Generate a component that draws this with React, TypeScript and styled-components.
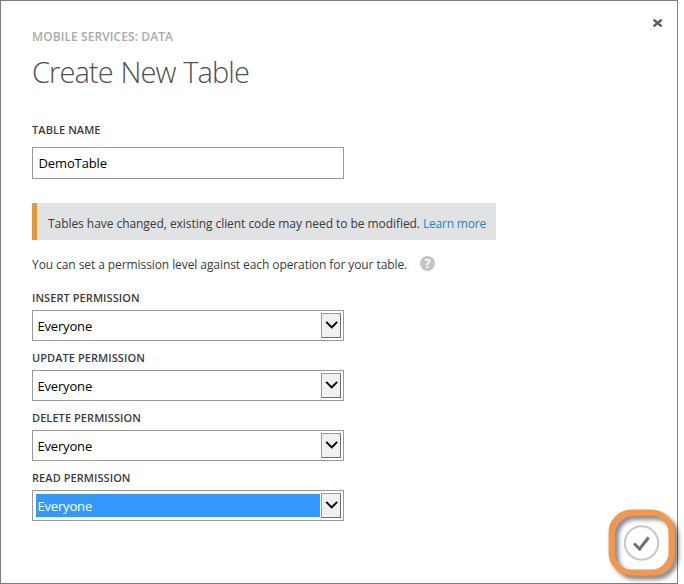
import React from 'react';
import styled, { createGlobalStyle } from 'styled-components';

const GlobalStyle = createGlobalStyle`
  * { box-sizing: border-box; }
  body { margin: 0; background: #fff; overflow: hidden; }
  #root { font-family: "Open Sans", "Noto Sans", sans-serif; }
`;

const Dialog = styled.main`
  position: relative;
  width: 678px;
  height: 584px;
  padding: 27px 0 0 31px;
  border: 1px solid #7f7f7f;
  background: #fff;
  white-space: nowrap;
`;

const CloseButton = styled.button`
  position: absolute;
  top: 16px;
  right: 13.5px;
  width: 12px;
  height: 12px;
  padding: 0;
  border: 0;
  background: none;
  svg { display: block; }
`;

const Breadcrumb = styled.div`
  height: 18px;
  font-size: 12px;
  line-height: 18px;
  font-weight: 600;
  letter-spacing: 0.09px;
  color: #aaa;
`;

const Title = styled.h1`
  margin: 5px 0 0;
  height: 40px;
  font-size: 29px;
  line-height: 41px;
  font-weight: 300;
  letter-spacing: -0.9px;
  word-spacing: 1px;
  color: #505050;
`;

const Label = styled.label`
  display: block;
  height: 16px;
  font-size: 11px;
  line-height: 16px;
  font-weight: 600;
  letter-spacing: 0.07px;
  color: #3c3c3c;
`;

const NameField = styled.section`
  margin-top: 31px;
`;

const TextInput = styled.input`
  display: block;
  width: 312px;
  height: 32px;
  margin-top: 9px;
  padding: 0 5.5px 1px;
  border: 1px solid #999;
  outline: 0;
  font: 13px "Open Sans", sans-serif;
  letter-spacing: -0.12px;
  color: #000;
`;

const Notice = styled.p`
  display: flex;
  align-items: center;
  width: 464px;
  height: 37px;
  margin: 24px 0 0;
  padding: 3px 0 0 11px;
  border-left: 5px solid #e59a36;
  background: #e1e2e4;
  font-size: 12px;
  letter-spacing: -0.055px;
  color: #3a3a3a;
`;

const Link = styled.a`
  margin-left: 3px;
  letter-spacing: -0.2px;
  color: #1c86c5;
`;

const Hint = styled.p`
  display: flex;
  align-items: flex-start;
  height: 18px;
  margin: 15px 0 0;
  font-size: 12px;
  line-height: 20px;
  letter-spacing: -0.082px;
  color: #3a3a3a;
`;

const HelpBadge = styled.span`
  display: grid;
  place-items: center;
  width: 15px;
  height: 15px;
  margin: 1px 0 0 13px;
  border-radius: 50%;
  background: #c4c4c4;
  color: #fff;
  font-size: 12px;
  line-height: 15px;
  font-weight: 700;
  letter-spacing: 0;
`;

const Permissions = styled.section`
  display: grid;
  gap: 9px;
  margin-top: 17px;
`;

const SelectBox = styled.div`
  display: flex;
  width: 312px;
  height: 31px;
  margin-top: 4px;
  padding: 2px;
  border: 1px solid #999;
`;

const SelectValue = styled.span<{ $active: boolean }>`
  width: 284px;
  height: 23px;
  margin: 1px 1px 0;
  padding-left: 1.5px;
  font-size: 13px;
  line-height: 24px;
  letter-spacing: -0.18px;
  color: ${({ $active }) => ($active ? '#fff' : '#000')};
  background: ${({ $active }) => ($active ? '#3399ff' : '#fff')};
`;

const SelectArrow = styled.span`
  width: 20px;
  height: 25px;
  border: 1px solid #999;
  border-right-color: #6e6e6e;
  border-bottom-color: #6e6e6e;
  background: #f0f0f0;
  svg { display: block; }
`;

const ConfirmButton = styled.button`
  position: absolute;
  left: 599px;
  top: 500px;
  width: 84px;
  height: 84px;
  padding: 0;
  border: 0;
  background: none;
  svg { display: block; overflow: visible; }
`;

const Ring = styled.rect`
  filter: drop-shadow(4px 4px 2px rgba(0, 0, 0, 0.5));
`;

const permissions = [
  { name: 'INSERT PERMISSION' },
  { name: 'UPDATE PERMISSION' },
  { name: 'DELETE PERMISSION' },
  { name: 'READ PERMISSION', active: true },
];

export default function App() {
  return (
    <>
      <GlobalStyle />
      <Dialog>
        <CloseButton aria-label="Close">
          <svg width="12" height="12" viewBox="0 0 12 12">
            <path d="M1.6 2.6 9.6 9.4M9.6 2.6 1.6 9.4" stroke="#595959" strokeWidth="2.5" />
          </svg>
        </CloseButton>
        <Breadcrumb>MOBILE SERVICES: DATA</Breadcrumb>
        <Title>Create New Table</Title>
        <NameField>
          <Label>TABLE NAME</Label>
          <TextInput defaultValue="DemoTable" spellCheck={false} />
        </NameField>
        <Notice>
          <span>Tables have changed, existing client code may need to be modified.</span>
          <Link>Learn more</Link>
        </Notice>
        <Hint>
          <span>You can set a permission level against each operation for your table.</span>
          <HelpBadge>?</HelpBadge>
        </Hint>
        <Permissions>
          {permissions.map(({ name, active = false }) => (
            <div key={name}>
              <Label>{name}</Label>
              <SelectBox>
                <SelectValue $active={active}>Everyone</SelectValue>
                <SelectArrow>
                  <svg width="18" height="23" viewBox="0 0 18 23">
                    <path d="M4.2 7.9 9.7 13.4 15.2 7.9" fill="none" stroke="#000" strokeWidth="1.9" />
                  </svg>
                </SelectArrow>
              </SelectBox>
            </div>
          ))}
        </Permissions>
        <ConfirmButton aria-label="Confirm">
          <svg width="84" height="84" viewBox="600 501 84 84">
            <circle cx="641.5" cy="543" r="16.7" fill="none" stroke="#c8c8c8" strokeWidth="2" />
            <path d="M634 543.5 639.6 549 648.6 537.5" fill="none" stroke="#707070" strokeWidth="3" />
            <Ring x="611.5" y="512.5" width="60" height="60" rx="20" fill="none" stroke="#f79646" strokeWidth="6" />
          </svg>
        </ConfirmButton>
      </Dialog>
    </>
  );
}
